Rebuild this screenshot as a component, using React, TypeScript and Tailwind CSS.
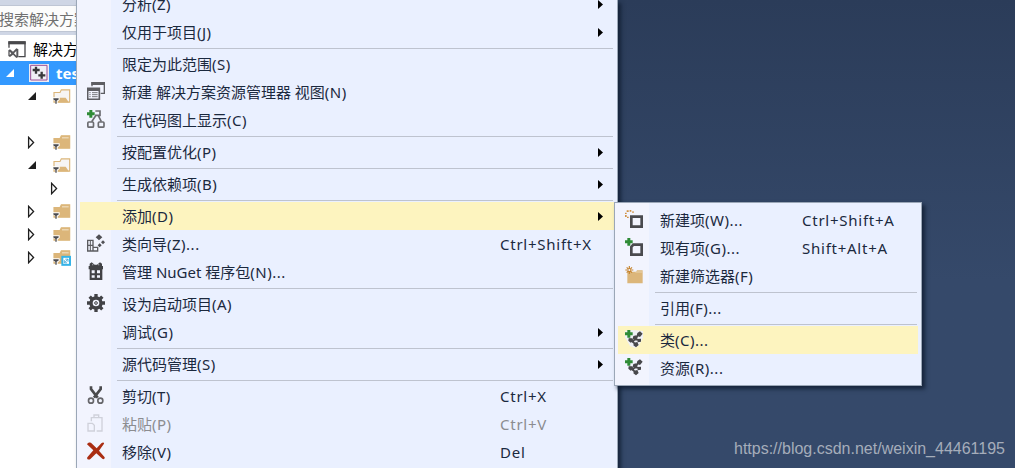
import type { ReactNode } from 'react';
import { clsx } from 'clsx';

type Item = {
  label: string;
  // access key and ellipsis that follow the label
  tail: string;
  keys?: string;
  icon?: ReactNode;
  sub?: boolean;
  active?: boolean;
  disabled?: boolean;
};

// Icons are drawn on a 54 unit grid, three units to a pixel.
function Glyph({ children }: { children: ReactNode }) {
  return (
    <svg viewBox="0 0 54 54" className="h-[18px] w-[18px] shrink-0" fill="none">
      {children}
    </svg>
  );
}

function Plus() {
  return <path d="M7 0h9v7h7v9h-7v7H7v-7H0V7h7z" fill="#2f8b36" />;
}

const windows = (
  <Glyph>
    <path d="M15 13V2h37v32H41" stroke="#5d5d62" strokeWidth="4" />
    <path d="M13 0h41v9H13z" fill="#5d5d62" />
    <path d="M2 19h35v33H2z" stroke="#5d5d62" strokeWidth="5" fill="#f2f4fe" />
    <path d="M2 18h35v9H2z" fill="#5d5d62" />
    <path d="M7 32h4m4 0h17M7 38h4m4 0h17M7 44h4m4 0h17" stroke="#77777c" strokeWidth="3" />
  </Glyph>
);

const codeMap = (
  <Glyph>
    <path d="M25 3h14v13H24M26 17 14 35M34 17l9 18" stroke="#6c6c70" strokeWidth="5" />
    <rect x="2.5" y="36" width="17" height="15.5" rx="3" stroke="#6c6c70" strokeWidth="5" />
    <rect x="34" y="36" width="17" height="15.5" rx="3" stroke="#6c6c70" strokeWidth="5" />
    <Plus />
  </Glyph>
);

const classWizard = (
  <Glyph>
    <path d="M2 19h16v15H2zM2 34v17h16V34M18 40h14v11H18z" stroke="#5b5b5f" strokeWidth="4" />
    <path d="M10 20v31" stroke="#5b5b5f" strokeWidth="3" />
    <path d="m36 1 10 9-10 9-10-9zM48 19l6 6-6 6-6-6zM38 28l6 6-6 6-6-6z" fill="#505054" />
  </Glyph>
);

const nuget = (
  <Glyph>
    <path d="M8 5 14 1l9 7h7l9-7 6 4v7h3v10h-2v32H8V22H5V12h3z" fill="#424246" />
    <path d="M14 25h9v9h-9zM30 25h9v9h-9zM14 40h9v7h-9zM30 40h9v7h-9z" fill="#f2f4fe" />
    <path d="M15 7h4v3h-4zM33 7h4v3h-4z" fill="#aaacb3" />
  </Glyph>
);

const gear = (
  <Glyph>
    <circle cx="27" cy="27" r="15" stroke="#424246" strokeWidth="10" />
    <circle cx="27" cy="27" r="4" stroke="#424246" strokeWidth="3" />
    <path
      d="M27 0v10M27 44v10M0 27h10M44 27h10M8 8l7 7M39 39l7 7M46 8l-7 7M15 39l-7 7"
      stroke="#424246"
      strokeWidth="10"
    />
  </Glyph>
);

const scissors = (
  <Glyph>
    <path d="M12 1v8l20 26M41 1v8L21 35" stroke="#4a4a4c" strokeWidth="8" />
    <circle cx="12" cy="44" r="7.5" stroke="#66666a" strokeWidth="5" />
    <circle cx="40" cy="44" r="7.5" stroke="#66666a" strokeWidth="5" />
  </Glyph>
);

const paste = (
  <Glyph>
    <path d="M13 22V11h32v40H29" stroke="#cfd1da" strokeWidth="4" />
    <path d="M21 11V3h14v8" stroke="#cfd1da" strokeWidth="4" />
    <path d="M3 28h13l6 6v17H3z" stroke="#cfd1da" strokeWidth="4" />
  </Glyph>
);

const remove = (
  <Glyph>
    <path d="M0 7C3 1 11 0 15 5l14 14L43 4c4-4 9-3 8 1L36 26l17 20c1 5-4 7-7 4L28 34 11 50c-5 5-13 2-10-4l18-21z" fill="#aa2d12" />
  </Glyph>
);

const newItem = (
  <Glyph>
    <path d="M19 20h31v30H19z" stroke="#4a4a4e" strokeWidth="8" fill="#f2f4fe" />
    <path d="M5 1h6v5H5zM14 0h5v5h-5zM22 4h4v5h-4zM0 8h5v4H0zM0 15h5v6H0zM6 20h5v4H6z" fill="#cf9143" />
  </Glyph>
);

const existingItem = (
  <Glyph>
    <path d="M25 20h25v30H19V27z" stroke="#4a4a4e" strokeWidth="8" fill="#f2f4fe" />
    <Plus />
  </Glyph>
);

const newFilter = (
  <Glyph>
    <path d="M7 17h26l3-4h17v39H7z" fill="#dcb67a" />
    <path d="M31 18h21" stroke="#f2e4cb" strokeWidth="2" />
    <path d="M13 0v24M1 12h24M5 4l16 16M21 4 5 20" stroke="#c7852f" strokeWidth="3.5" />
    <circle cx="13" cy="12" r="3" fill="#f2f4fe" />
  </Glyph>
);

function ClassIcon({ halo }: { halo?: boolean }) {
  return (
    <Glyph>
      {halo && <path d="M0 3 23 0 54 3v20L42 46l-11 8-16-6L0 22z" fill="#eff0f6" />}
      <path d="m13 28 13 4 14-17M20 33l12 10M30 28l13 2" stroke="#48484b" strokeWidth="5" />
      <path
        d="m37 9 8-5 8 7-8 10-10-4zM25 18l9-2 4 9-8 6-7-5zM11 25h11l3 8-8 5-7-6zM27 38l10-2 4 9-8 7-8-6zM37 27l11-1v9l-10 2z"
        fill="#48484b"
      />
      <Plus />
    </Glyph>
  );
}

const MENU: (Item | null)[] = [
  { label: '分析', tail: '(Z)', sub: true },
  { label: '仅用于项目', tail: '(J)', sub: true },
  null,
  { label: '限定为此范围', tail: '(S)' },
  { label: '新建 解决方案资源管理器 视图', tail: '(N)', icon: windows },
  { label: '在代码图上显示', tail: '(C)', icon: codeMap },
  null,
  { label: '按配置优化', tail: '(P)', sub: true },
  null,
  { label: '生成依赖项', tail: '(B)', sub: true },
  null,
  { label: '添加', tail: '(D)', sub: true, active: true },
  { label: '类向导', tail: '(Z)...', keys: 'Ctrl+Shift+X', icon: classWizard },
  { label: '管理 NuGet 程序包', tail: '(N)...', icon: nuget },
  null,
  { label: '设为启动项目', tail: '(A)', icon: gear },
  { label: '调试', tail: '(G)', sub: true },
  null,
  { label: '源代码管理', tail: '(S)', sub: true },
  null,
  { label: '剪切', tail: '(T)', keys: 'Ctrl+X', icon: scissors },
  { label: '粘贴', tail: '(P)', keys: 'Ctrl+V', icon: paste, disabled: true },
  { label: '移除', tail: '(V)', keys: 'Del', icon: remove },
];

const SUBMENU: (Item | null)[] = [
  { label: '新建项', tail: '(W)...', keys: 'Ctrl+Shift+A', icon: newItem },
  { label: '现有项', tail: '(G)...', keys: 'Shift+Alt+A', icon: existingItem },
  { label: '新建筛选器', tail: '(F)', icon: newFilter },
  null,
  { label: '引用', tail: '(F)...' },
  null,
  { label: '类', tail: '(C)...', icon: <ClassIcon halo />, active: true },
  { label: '资源', tail: '(R)...', icon: <ClassIcon /> },
];

function MenuList({ items, keysClass }: { items: (Item | null)[]; keysClass: string }) {
  return (
    <ul>
      {items.map((it, i) =>
        it ? (
          <li
            key={i}
            className={clsx(
              'flex h-7 pl-[7px] text-[15px] leading-7 whitespace-pre',
              it.active && 'bg-[#fdf4bf]',
              it.disabled ? 'text-[#8b8c90]' : 'text-[#1b293e]',
            )}
          >
            <span className="w-[35px] pt-1">{it.icon}</span>
            <span className="flex-1">
              {it.label}
              <span className="tracking-[0.5px]">{it.tail}</span>
            </span>
            <span className={clsx('flex tracking-[0.75px]', keysClass)}>
              {it.keys}
              {it.sub && (
                <svg viewBox="0 0 5 9" className="mt-[10px] ml-[98px] h-[9px] w-[5px]">
                  <path d="M0 0v9l5-4.5z" fill="#000" />
                </svg>
              )}
            </span>
          </li>
        ) : (
          <li key={i} className="mr-px ml-[37px] h-1 pt-[2px]">
            <div className="h-px bg-[#bec3cf]" />
          </li>
        ),
      )}
    </ul>
  );
}

function Twisty({ open, light }: { open?: boolean; light?: boolean }) {
  return (
    <svg viewBox="0 0 10 13" className="h-[13px] w-[10px] shrink-0">
      {open ? (
        <path d="M9 2v8H1z" fill={light ? '#fff' : '#1e1e1e'} />
      ) : (
        <path d="M1.6 1.3v10.4L6.6 6.5z" fill="#fff" stroke="#1e1e1e" strokeWidth="1.3" />
      )}
    </svg>
  );
}

function Folder({ open, link }: { open?: boolean; link?: boolean }) {
  return (
    <svg viewBox="0 0 54 50" className="h-[17px] w-[18px] shrink-0">
      <path
        d="M3 13h18l4-8h25v37H3z"
        fill={open ? '#f7f5f4' : '#dcb67a'}
        stroke="#dcb67a"
        strokeWidth="3.5"
      />
      {open ? (
        <path d="M12 29h26l10 14H12z" fill="#dcb67a" />
      ) : (
        <path d="M27 11h20" stroke="#f3e5cd" strokeWidth="3" />
      )}
      <path d="M0 27h20v8l-6 5v10H7V40l-7-5z" fill="#fff" />
      <path d="M1 30h16v4l-6 4v9H7v-9l-6-4z" fill="#4b4b4f" />
      {link && (
        <>
          <path d="M25 20h29v30H25z" fill="#35b4e8" />
          <path d="M31 26h17v18H31z" fill="#fff" />
          <path d="M37 30h8v8M45 30l-9 9M34 33v8h8" stroke="#35a4d8" strokeWidth="2.5" fill="none" />
        </>
      )}
    </svg>
  );
}

function SolutionIcon() {
  return (
    <svg viewBox="0 0 54 51" className="h-[17px] w-[18px] shrink-0">
      <path d="M3 20V3h48v44H31" stroke="#48484b" strokeWidth="4" fill="none" />
      <path d="M1 1h52v9H1z" fill="#48484b" />
      <path d="m1 28 5-3 9 7 10-10 6 3v23l-6 3-10-10-9 7-5-3z" fill="#58585b" />
      <path d="m5 32 5 5-5 5zM25 30v14l-7-7z" fill="#fff" />
    </svg>
  );
}

function ProjectIcon() {
  return (
    <svg viewBox="0 0 60 54" className="h-[18px] w-5 shrink-0">
      <path d="M0 0h60v54H0z" fill="#eceaf2" />
      <path d="M5 4h49v44H5z" stroke="#9a4f96" strokeWidth="3" fill="#f0eff6" />
      <path d="M21 8v21M11 18h21M38 23v21M28 34h21" stroke="#38383b" strokeWidth="7" />
    </svg>
  );
}

const TREE: { kind: 'open' | 'closed' | 'leaf' | 'blank' | 'link' }[] = [
  { kind: 'open' },
  { kind: 'blank' },
  { kind: 'closed' },
  { kind: 'open' },
  { kind: 'leaf' },
  { kind: 'closed' },
  { kind: 'closed' },
  { kind: 'link' },
];

function Explorer() {
  return (
    <aside className="h-full w-[76px] shrink-0 overflow-hidden bg-white whitespace-nowrap">
      <div className="h-[5px] bg-[#cfd6e5]" />
      <div className="h-[27px] border-y border-[#bfc6d4] bg-[#fcfcfc] text-[15px] leading-[26px] text-[#717171]">
        <span className="-ml-px">搜索解决方案</span>
      </div>
      <div className="h-[3px] bg-[#cfd6e5]" />
      <div className="flex h-[26px] items-center pt-[2px] pl-2 text-[15px] text-black">
        <SolutionIcon />
        <span className="ml-[7px]">解决方案</span>
      </div>
      <div className="flex h-6 items-center bg-[#3399ff] pl-[5px] text-[15px] font-bold text-white">
        <Twisty open light />
        <span className="ml-[14px] flex">
          <ProjectIcon />
        </span>
        <span className="ml-[7px]">test</span>
      </div>
      {TREE.map((row, i) => (
        <div key={i} className={clsx('flex h-[23px] items-center', row.kind === 'leaf' ? 'pl-[50px]' : 'pl-[27px]')}>
          {row.kind !== 'blank' && <Twisty open={row.kind === 'open'} />}
          {row.kind !== 'blank' && row.kind !== 'leaf' && (
            <span className="ml-4 flex">
              <Folder open={row.kind === 'open'} link={row.kind === 'link'} />
            </span>
          )}
        </div>
      ))}
    </aside>
  );
}

const PANEL =
  'border-[#9ba7b7] bg-[linear-gradient(90deg,#f2f4fe_34px,#eaf0ff_34px)] px-[3px] shadow-[3px_3px_4px_#0f1b2fcc]';

export default function App() {
  return (
    <main className="relative flex h-[468px] w-[1015px] overflow-hidden bg-linear-to-b from-[#2b3c59] to-[#35496a] to-60% font-['Noto_Sans','Noto_Sans_CJK_SC',sans-serif]">
      <Explorer />
      <div className={clsx('z-10 h-full w-[542px] border-x', PANEL)}>
        <div className="-mt-[10px]">
          <MenuList items={MENU} keysClass="w-[114px]" />
        </div>
      </div>
      {/* Submenu floats over the right edge of the context menu */}
      <div className={clsx('absolute top-[202px] left-[614px] z-20 w-[308px] border py-[3px]', PANEL)}>
        <MenuList items={SUBMENU} keysClass="w-[116px]" />
      </div>
      <p className="mt-auto mr-[10px] mb-[7px] ml-auto font-['Liberation_Sans',sans-serif] text-[16px] leading-6 text-[#a5adba]">
        https://blog.csdn.net/weixin_44461195
      </p>
    </main>
  );
}
